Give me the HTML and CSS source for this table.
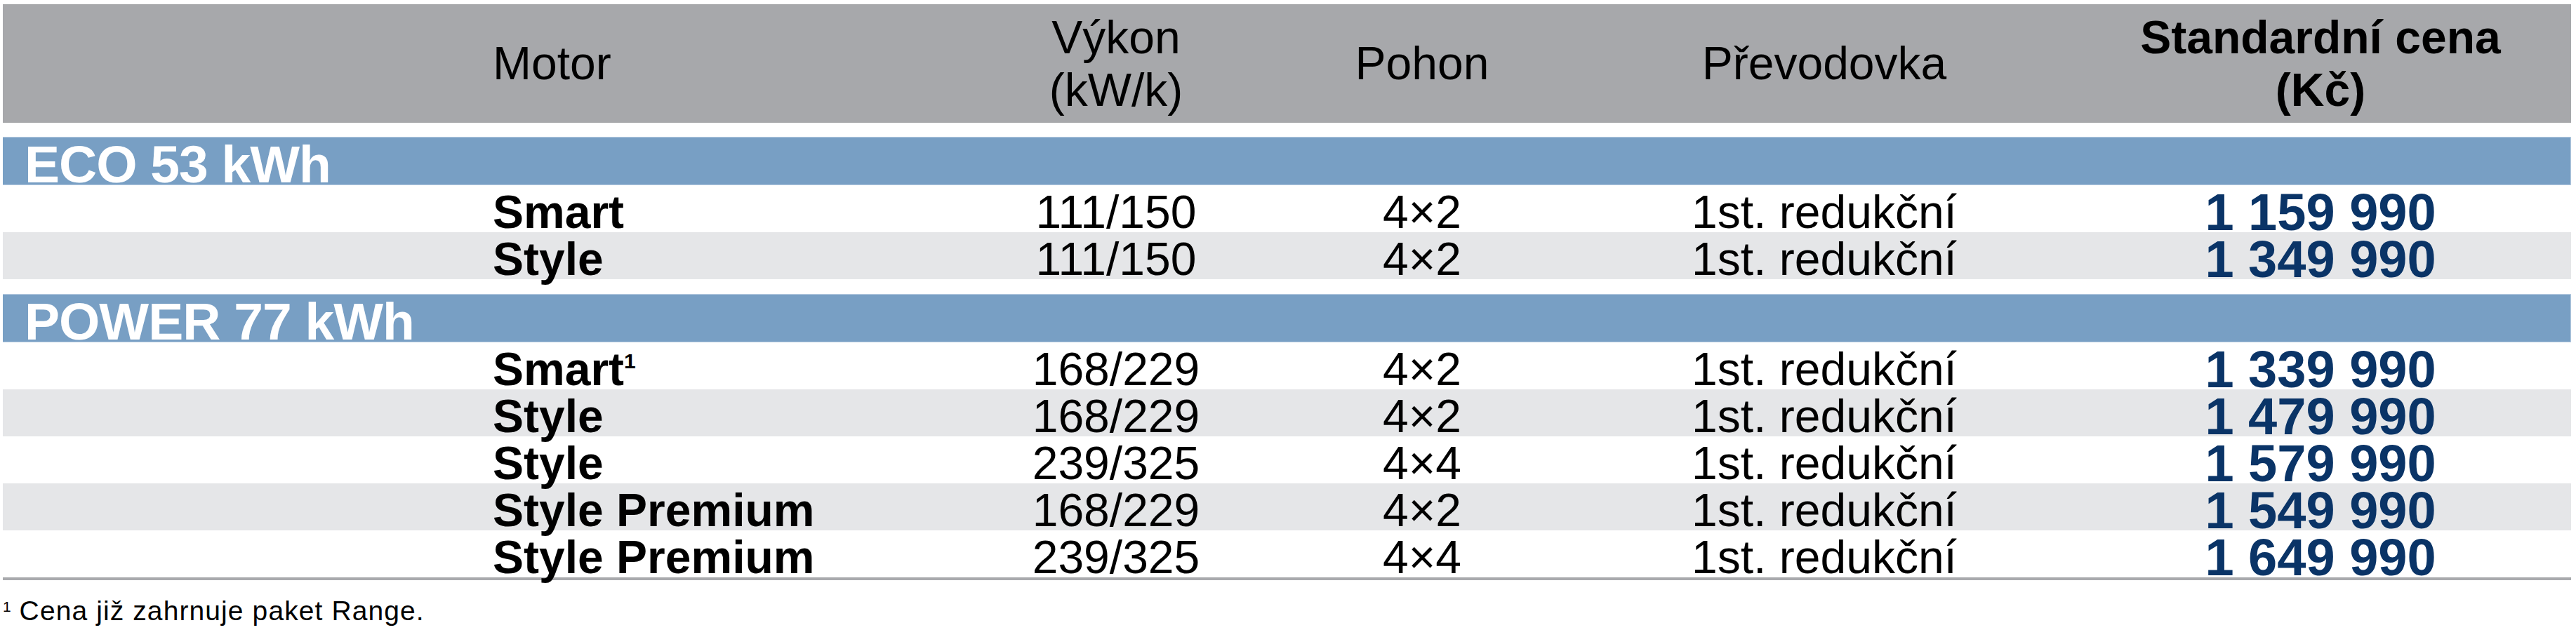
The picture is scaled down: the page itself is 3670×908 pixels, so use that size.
FILE: index.html
```html
<!DOCTYPE html>
<html lang="cs">
<head>
<meta charset="utf-8">
<title>Ceník</title>
<link rel="stylesheet" href="styles.css">
</head>
<body>
<div class="sheet">
  <div class="grid head">
    <div></div>
    <div class="hc left">Motor</div>
    <div class="hc">Výkon<br>(kW/k)</div>
    <div class="hc">Pohon</div>
    <div class="hc">Převodovka</div>
    <div class="hc strong pcol">Standardní cena<br>(Kč)</div>
  </div>

  <section class="group">
    <div class="band">ECO 53 kWh</div>
    <div class="grid row">
      <div></div><div class="c model">Smart</div><div class="c">111/150</div><div class="c">4×2</div><div class="c">1st. redukční</div><div class="c price pcol">1 159 990</div>
    </div>
    <div class="grid row">
      <div></div><div class="c model">Style</div><div class="c">111/150</div><div class="c">4×2</div><div class="c">1st. redukční</div><div class="c price pcol">1 349 990</div>
    </div>
  </section>

  <section class="group">
    <div class="band">POWER 77 kWh</div>
    <div class="grid row">
      <div></div><div class="c model">Smart<sup class="rsup">1</sup></div><div class="c">168/229</div><div class="c">4×2</div><div class="c">1st. redukční</div><div class="c price pcol">1 339 990</div>
    </div>
    <div class="grid row">
      <div></div><div class="c model">Style</div><div class="c">168/229</div><div class="c">4×2</div><div class="c">1st. redukční</div><div class="c price pcol">1 479 990</div>
    </div>
    <div class="grid row">
      <div></div><div class="c model">Style</div><div class="c">239/325</div><div class="c">4×4</div><div class="c">1st. redukční</div><div class="c price pcol">1 579 990</div>
    </div>
    <div class="grid row">
      <div></div><div class="c model">Style Premium</div><div class="c">168/229</div><div class="c">4×2</div><div class="c">1st. redukční</div><div class="c price pcol">1 549 990</div>
    </div>
    <div class="grid row">
      <div></div><div class="c model">Style Premium</div><div class="c">239/325</div><div class="c">4×4</div><div class="c">1st. redukční</div><div class="c price pcol">1 649 990</div>
    </div>
  </section>

  <div class="rule"></div>
  <p class="note"><sup class="nsup">1</sup> Cena již zahrnuje paket Range.</p>
</div>
</body>
</html>
```

FILE: styles.css
```css
html, body {
  margin: 0;
  padding: 0;
  background: #ffffff;
}

body {
  width: 3670px;
  height: 908px;
  overflow: hidden;
  font-family: "Liberation Sans", Arial, sans-serif;
  color: #000000;
}

.sheet {
  width: 3659px;
  margin-left: 4px;
  padding-top: 6px;
}

.grid {
  display: grid;
  grid-template-columns: 698px 692px 392px 480px 666px 731px;
}

/* header */
.head {
  height: 169px;
  background: #a7a8ab;
  align-items: center;
}

.hc {
  font-size: 66px;
  line-height: 75px;
  text-align: center;
  font-weight: 400;
}

.hc.left {
  text-align: left;
}

.hc.strong {
  font-weight: 700;
}

.pcol {
  padding-left: 17px;
}

/* groups */
.group {
  margin-top: 20px;
}

.group + .group {
  margin-top: 21px;
}

.band {
  height: 62px;
  padding-top: 5px;
  padding-left: 31px;
  background: #789fc4;
  border-top: 1px solid #b7cbe0;
  border-bottom: 1px solid #b7cbe0;
  box-shadow: inset -1px 0 0 #b7cbe0;
  color: #ffffff;
  font-family: "Liberation Sans", Arial, sans-serif;
  font-weight: 700;
  font-size: 75px;
  line-height: 66px;
  letter-spacing: -1px;
  white-space: nowrap;
}

.row {
  height: 67px;
  grid-template-rows: 67px;
  background: #ffffff;
}

.group .row:nth-of-type(odd) {
  background: #e5e6e8;
}

.c {
  font-size: 66px;
  line-height: 58px;
  padding-top: 9px;
  text-align: center;
  white-space: nowrap;
}

.c.model {
  text-align: left;
  font-weight: 700;
}

.c.price {
  font-size: 74px;
  font-weight: 700;
  line-height: 56px;
  padding-top: 11px;
  color: #0a3467;
}

.rsup {
  font-size: 30px;
  line-height: 0;
  vertical-align: 24px;
  font-weight: 700;
}

.rule {
  height: 4px;
  background: #a9aaad;
}

.note {
  margin: 24px 0 0 0;
  font-size: 39px;
  line-height: 40px;
  letter-spacing: 1.1px;
  white-space: nowrap;
}

.nsup {
  font-size: 21px;
  line-height: 0;
  vertical-align: 12px;
  letter-spacing: 0;
}
```
